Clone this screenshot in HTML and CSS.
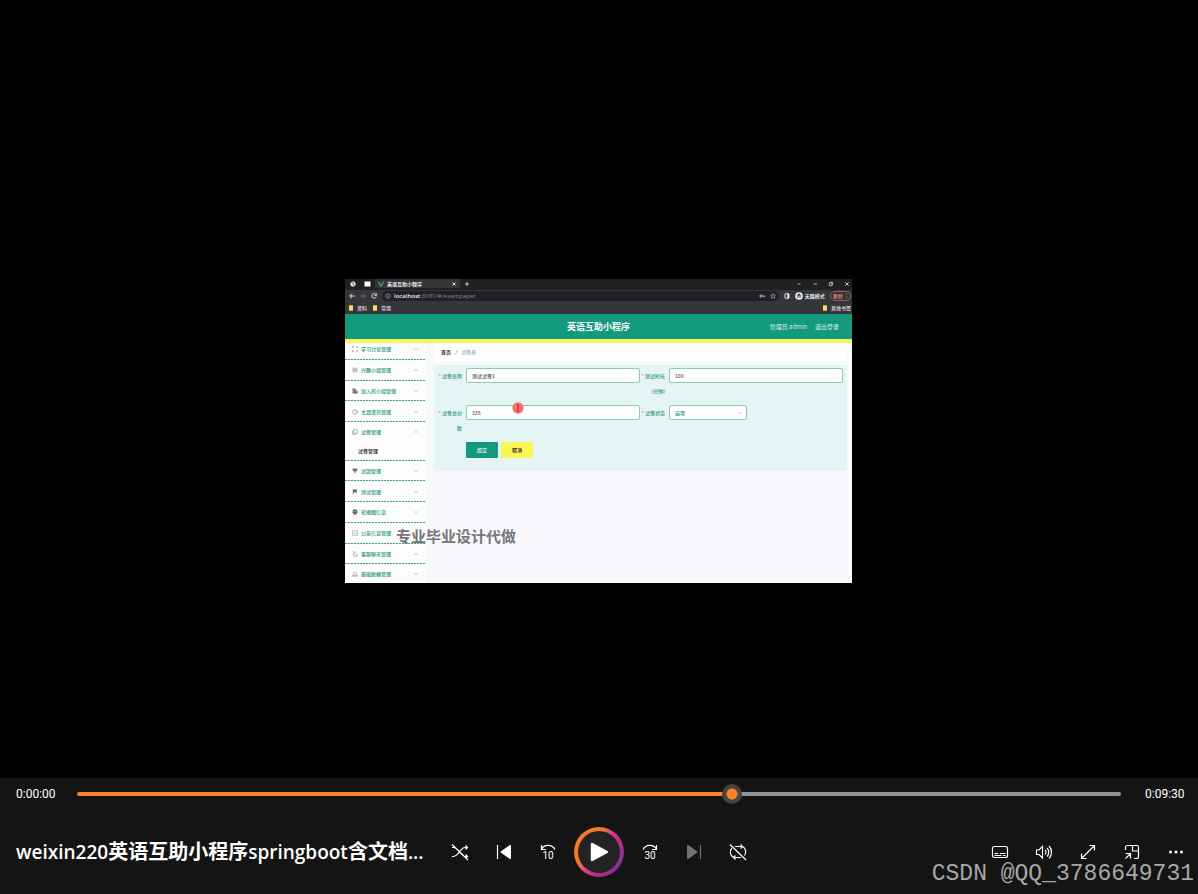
FILE: index.html
```html
<!DOCTYPE html>
<html lang="zh-CN">
<head>
<meta charset="utf-8">
<meta name="viewport" content="width=device-width, initial-scale=1">
<title>weixin220英语互助小程序springboot含文档</title>
<link rel="stylesheet" href="styles.css">
</head>
<body>
<svg class="defs" aria-hidden="true">
  <symbol id="chev" viewBox="0 0 6 6"><path d="M1 2l2 2 2-2" fill="none" stroke="currentColor" stroke-width=".7"/></symbol>
  <symbol id="folder" viewBox="0 0 6 6"><path d="M1 .3h4v5.4H1z" fill="#f6dc6c"/></symbol>
</svg>
<main class="stage">
  <section class="video" aria-label="视频画面">
    <div class="tabs">
      <svg class="ic" viewBox="0 0 6 6"><circle cx="3" cy="3" r="2.6" fill="#eee"/><path d="M1.5 1.5l1.7.6.4 1.6M3.5 5l1-1" stroke="#222" stroke-width=".8" fill="none"/></svg>
      <svg class="ic ic-wide" viewBox="0 0 7 6"><path d="M.5.5h6v5h-6z" fill="#fff"/></svg>
      <div class="tab">
        <svg class="ic" viewBox="0 0 6 6"><path d="M.5.8L3 5.2 5.5.8" fill="none" stroke="#3fb37f" stroke-width="1.1"/></svg>
        <span>英语互助小程序</span>
        <svg class="ic tab-close" viewBox="0 0 6 6"><path d="M1.5 1.5l3 3M4.5 1.5l-3 3" stroke="#eee" stroke-width=".9"/></svg>
      </div>
      <svg class="ic" viewBox="0 0 6 6"><path d="M3 .8v4.4M.8 3h4.4" stroke="#ddd" stroke-width=".8"/></svg>
      <div class="win">
        <svg class="ic" viewBox="0 0 6 6"><path d="M1.5 2L3 3.7 4.500 2" fill="none" stroke="#bbb" stroke-width=".8"/></svg>
        <svg class="ic" viewBox="0 0 6 6"><path d="M1.500 3h3.500" stroke="#ccc" stroke-width=".8"/></svg>
        <svg class="ic" viewBox="0 0 6 6"><path d="M1.300 2h2.700v2.700H1.300zM2.200 1.900V1.200h2.500v2.600" fill="none" stroke="#ddd" stroke-width=".7"/></svg>
        <svg class="ic" viewBox="0 0 6 6"><path d="M1.300 1.300l3.400 3.400M4.700 1.300L1.300 4.700" stroke="#eee" stroke-width=".8"/></svg>
      </div>
    </div>
    <div class="address">
      <svg class="ic" viewBox="0 0 6 6"><path d="M5.700 3H.8M3 .8L.8 3 3 5.200" fill="none" stroke="#eee" stroke-width=".9"/></svg>
      <svg class="ic" viewBox="0 0 6 6"><path d="M.5 3h4.700M3 .8L5.200 3 3 5.200" fill="none" stroke="#77797c" stroke-width=".8"/></svg>
      <svg class="ic" viewBox="0 0 6 6"><path d="M5 1.600A2.300 2.300 0 1 0 5.300 3.500M5.400.4v2H3.500" fill="none" stroke="#eee" stroke-width=".9"/></svg>
      <div class="url">
        <svg class="ic" viewBox="0 0 6 6"><circle cx="3" cy="3" r="2.300" fill="none" stroke="#aaa" stroke-width=".6"/><path d="M3 1.600v.7M3 2.700v1.700" stroke="#bbb" stroke-width=".7"/></svg>
        <span><b>localhost</b>:8081/#/exampaper</span>
        <svg class="ic key" viewBox="0 0 6 6"><circle cx="1.800" cy="3" r="1" fill="none" stroke="#ddd" stroke-width=".8"/><path d="M2.800 3h2.700v1.200" fill="none" stroke="#ddd" stroke-width=".8"/></svg>
        <svg class="ic" viewBox="0 0 6 6"><path d="M3 .6l.7 1.600 1.700.1-1.300 1.200.4 1.700L3 4.300l-1.500.9.4-1.700L.6 2.300l1.700-.1z" fill="none" stroke="#ddd" stroke-width=".5"/></svg>
      </div>
      <svg class="ic" viewBox="0 0 6 6"><path d="M1 .8h4v4.400H1z" fill="none" stroke="#eee" stroke-width=".9"/><path d="M3.300.8H5v4.400H3.300z" fill="#eee"/></svg>
      <div class="mode">
        <svg class="ic ic-big" viewBox="0 0 8 8"><circle cx="4" cy="4" r="3.800" fill="#f4f4f4"/><path d="M1.600 3.900h4.800M2.700 3.600l.5-1.500h1.600l.5 1.500" stroke="#333" stroke-width=".7" fill="#333"/><circle cx="2.900" cy="5.200" r=".6"/><circle cx="5.100" cy="5.200" r=".6"/></svg>
        <span>无痕模式</span>
      </div>
      <button class="update" type="button">更新 <span>⋮</span></button>
    </div>
    <div class="marks">
      <span><svg class="ic"><use href="#folder"/></svg>资料</span>
      <span><svg class="ic"><use href="#folder"/></svg>常用</span>
      <span class="other"><svg class="ic"><use href="#folder"/></svg>其他书签</span>
    </div>
    <header class="banner">
      <h2>英语互助小程序</h2>
      <nav><a href="#admin">管理员 admin</a><a href="#exit">退出登录</a></nav>
    </header>
    <div class="app">
      <nav class="side">
        <a class="item first" href="#m1"><svg class="ic" viewBox="0 0 6 6"><path d="M.6 2V.6H2M4 .6h1.400V2M5.400 4v1.400H4M2 5.400H.6V4" fill="none" stroke="#777" stroke-width=".6"/></svg>学习讨论管理<svg class="arrow"><use href="#chev"/></svg></a>
        <a class="item" href="#m2"><svg class="ic" viewBox="0 0 6 6"><path d="M.5 1.200h5M.5 2.400h5M.5 3.600h5M.5 4.800h5" stroke="#888" stroke-width=".6"/></svg>兴趣小组管理<svg class="arrow"><use href="#chev"/></svg></a>
        <a class="item" href="#m3"><svg class="ic" viewBox="0 0 6 6"><path d="M.5.600h3v1.800h2v3h-5z" fill="#666"/><path d="M1.500 1.500v3M4 3.500h1" stroke="#ddd" stroke-width=".5"/></svg>加入的小组管理<svg class="arrow"><use href="#chev"/></svg></a>
        <a class="item" href="#m4"><svg class="ic" viewBox="0 0 6 6"><path d="M3 1.300V3h1.500" fill="none" stroke="#777" stroke-width=".5"/><circle cx="3" cy="3" r="2.500" fill="none" stroke="#777" stroke-width=".5"/></svg>主题资讯管理<svg class="arrow"><use href="#chev"/></svg></a>
        <div class="group">
          <a class="item" href="#m5"><svg class="ic" viewBox="0 0 6 6"><path d="M1.700.600h3.700V4.400H1.700zM1.700 2H.6v3.400h3V4.400" fill="none" stroke="#777" stroke-width=".5"/></svg>试卷管理<svg class="arrow up"><use href="#chev"/></svg></a>
          <a class="sub" href="#m5a">试卷管理</a>
        </div>
        <a class="item" href="#m6"><svg class="ic" viewBox="0 0 6 6"><path d="M.5.6h5v1.600L4.300 3.500h-.8v1.900h-1V3.500h-.8L.5 2.200z" fill="#777"/></svg>试题管理<svg class="arrow"><use href="#chev"/></svg></a>
        <a class="item" href="#m7"><svg class="ic" viewBox="0 0 6 6"><path d="M.8.500h4.700l-1 1.500 1 1.600H1.500v2H.8z" fill="#666"/></svg>测试管理<svg class="arrow"><use href="#chev"/></svg></a>
        <a class="item" href="#m8"><svg class="ic" viewBox="0 0 6 6"><path d="M1.400.600h3.200l.9 1.500v2H4.700v1.300H1.300V4.100H.5v-2z" fill="#666"/><path d="M.8 2.500h4.400" stroke="#ccc" stroke-width=".4"/></svg>轮播图信息<svg class="arrow"><use href="#chev"/></svg></a>
        <a class="item" href="#m9"><svg class="ic" viewBox="0 0 6 6"><path d="M.6.800h4.800v4.500H.6zM1.700 3l1 1 1.700-2" fill="none" stroke="#888" stroke-width=".5"/></svg>公告信息管理<svg class="arrow"><use href="#chev"/></svg></a>
        <a class="item" href="#m10"><svg class="ic" viewBox="0 0 6 6"><path d="M.6 1h4M1 2.500h2.500M1.500 2.500v2.800h3.700V2.700M3.500 3.500l1.500 1.500" fill="none" stroke="#888" stroke-width=".5"/></svg>客服聊天管理<svg class="arrow"><use href="#chev"/></svg></a>
        <a class="item last" href="#m11"><svg class="ic" viewBox="0 0 6 6"><path d="M1.300 4.200V2.600a1.700 1.700 0 0 1 3.400 0v1.600M.5 4.500h5v.8h-5zM3 3v1" fill="none" stroke="#888" stroke-width=".5"/></svg>基础数据管理<svg class="arrow"><use href="#chev"/></svg></a>
      </nav>
      <div class="content">
        <div class="crumb"><b>首页</b><i>/</i><span>试卷表</span></div>
        <form class="form">
          <label for="f1"><em>*</em>试卷名称</label><input id="f1" value="测试试卷1">
          <label for="f2"><em>*</em>测试时长<br>(分钟)</label><input id="f2" value="100">
          <label for="f3"><em>*</em>试卷总分<br>数</label><input id="f3" value="335">
          <label for="f4"><em>*</em>试卷状态</label>
          <div class="pick"><select id="f4"><option>启用</option></select><svg class="arrow"><use href="#chev"/></svg></div>
          <div class="actions"><button class="ok" type="button">提交</button><button class="cancel" type="button">取消</button></div>
        </form>
      </div>
    </div>
    <svg class="pointer" viewBox="0 0 12 12"><circle cx="6" cy="6" r="5.700" fill="#f4736c"/><path d="M5 3h2M5 9h2M6 3v6" stroke="#a92b2b" stroke-width=".9"/></svg>
    <div class="caption">专业毕业设计代做</div>
  </section>
</main>
<footer class="player">
  <div class="timeline">
    <time>0:00:00</time>
    <input class="seek" type="range" min="0" max="570" value="359" aria-label="播放进度">
    <time>0:09:30</time>
  </div>
  <div class="controls">
    <h1>weixin220<span>英语互助小程序</span>springboot<span>含文档</span>...</h1>
    <div class="transport">
      <button type="button" aria-label="随机播放"><svg viewBox="0 0 20 20"><path d="M2 14.500h1.500c2 0 3.200-1.200 4.500-3l3.500-4C12.500 6 13.500 5.500 15 5.500h2.500M2 5.500h1.500c2 0 3.200 1.200 4.500 2.500l3.500 4c1 1.500 2 2.500 3.500 2.500h2.500M15.500 3.500l2 2-2 2M15.500 12.500l2 2-2 2M2 2.500l16 15.500"/></svg></button>
      <button type="button" aria-label="上一个"><svg viewBox="0 0 20 20"><path d="M3.500 3v14"/><path class="solid" d="M17 4v12c0 .8-.8 1.300-1.500.8l-8.500-6a1 1 0 0 1 0-1.600l8.500-6c.7-.5 1.500 0 1.500.8z"/></svg></button>
      <button type="button" aria-label="后退10秒"><svg viewBox="0 0 20 20"><path d="M3.500 3v4.500H8M3.500 7C6 2.500 14 1.500 17 7.500"/><text x="10" y="17">10</text></svg></button>
      <button class="play" type="button" aria-label="播放"><svg viewBox="0 0 24 24"><path class="solid" d="M3 3.500v17c0 1.200 1.200 1.800 2.200 1.200l16-8.500c1-.6 1-1.800 0-2.400l-16-8.500C4.200 1.700 3 2.300 3 3.500z"/></svg></button>
      <button type="button" aria-label="前进30秒"><svg viewBox="0 0 20 20"><path d="M16.500 3v4.500H12M16.500 7C14 2.500 6 1.500 3 7.500"/><text x="10" y="17">30</text></svg></button>
      <button class="off" type="button" aria-label="下一个"><svg viewBox="0 0 20 20"><path d="M16.500 3v14"/><path class="solid" d="M3 4v12c0 .8.8 1.300 1.500.8l8.500-6a1 1 0 0 0 0-1.600l-8.500-6C3.800 2.700 3 3.200 3 4z"/></svg></button>
      <button type="button" aria-label="循环"><svg viewBox="0 0 20 20"><path d="M7 4.500h7.500M14.500 4.500a6 6 0 0 1 2 9M13 15.500H5.500M5.500 15.500a6 6 0 0 1-1.500-9.500M12.500 2.500l2 2-2 2M7.500 13.500l-2 2 2 2M2 2.500l16 15.500"/></svg></button>
    </div>
    <div class="tools">
      <button type="button" aria-label="字幕"><svg viewBox="0 0 20 20"><rect x="2.500" y="4.500" width="15" height="11" rx="2"/><path d="M4.500 11.500h4M10 11.500h5.500M4.500 13.500h7M13 13.500h2.500"/></svg></button>
      <button type="button" aria-label="音量"><svg viewBox="0 0 20 20"><path d="M2.500 8v4.500h2.500l3.500 3.500V4.500L5 8zM11 8a3 3 0 0 1 0 4.500M13 6a6 6 0 0 1 0 8.500M15 4a9 9 0 0 1 0 12.500"/></svg></button>
      <button type="button" aria-label="全屏"><svg viewBox="0 0 20 20"><path d="M3.500 16.500l13-13M11.500 3.500h5v5M3.500 11.500v5h5"/></svg></button>
      <button type="button" aria-label="迷你播放器"><svg viewBox="0 0 20 20"><path d="M3.500 8V5.500a2 2 0 0 1 2-2h9a2 2 0 0 1 2 2v9a2 2 0 0 1-2 2H12M10.500 3.500V9h6M3.500 16.500l5-5M3.500 11.500h5v5"/></svg></button>
      <button type="button" aria-label="更多"><svg viewBox="0 0 20 20"><g class="solid"><circle cx="4.500" cy="10" r="1.500"/><circle cx="10" cy="10" r="1.500"/><circle cx="15.500" cy="10" r="1.500"/></g></svg></button>
    </div>
  </div>
  <div class="watermark">CSDN @QQ_3786649731</div>
</footer>
</body>
</html>
```
FILE: styles.css
```css
* { box-sizing: border-box; }
body { margin: 0; min-height: 100vh; display: flex; flex-direction: column; background: #000; color: #fff; font-family: "Open Sans", "Noto Sans CJK SC", sans-serif; }
button, input, select { font: inherit; color: inherit; margin: 0; padding: 0; border: 0; background: none; }
a { color: inherit; text-decoration: none; }
.defs { position: absolute; width: 0; height: 0; }

.stage { flex: 1; display: flex; align-items: center; justify-content: center; padding: 84px 1px 0 0; }
.video { position: relative; width: 507px; font: 500 5px/8px "Noto Sans CJK SC", sans-serif; background: #f9f8fc; }
.ic { width: 6px; height: 6px; flex: none; display: block; }
.ic-wide { width: 7px; }
.ic-big { width: 8px; height: 8px; }

.tabs { display: flex; align-items: center; gap: 8px; height: 11px; padding: 0 2px 2px 5px; background: #202124; }
.tab { display: flex; align-items: center; gap: 3px; width: 85px; height: 9px; margin: 0 -4px; padding: 0 3px; background: #35363a; }
.tab-close { margin-left: auto; }
.win { display: flex; gap: 10px; margin-left: auto; }
.address { display: flex; align-items: center; gap: 5px; height: 12px; padding: 0 1px 0 4px; background: #35363a; }
.url { flex: 1; display: flex; align-items: center; gap: 3px; height: 10px; padding: 0 3px; border-radius: 5px; background: #202124; color: #888; font-size: 6px; font-family: "Open Sans", sans-serif; font-weight: 400; }
.url b { color: #eee; font-weight: 600; }
.key { margin-left: auto; margin-right: 2px; }
.mode { display: flex; align-items: center; gap: 2px; }
.update { height: 10px; padding: 0 1px 0 2px; border: 1px solid #a45850; border-radius: 5px; color: #e8867c; line-height: 8px; white-space: nowrap; }
.marks { display: flex; gap: 5px; height: 12px; padding: 0 1px 0 3px; background: #35363a; color: #ddd; }
.marks > span { display: flex; align-items: center; gap: 3px; }
.marks .other { margin-left: auto; }

.banner { display: grid; grid-template-columns: 1fr auto 1fr; align-items: center; height: 29px; border-bottom: 4px solid #fbf35a; background: #13997d; }
.banner h2 { grid-column: 2; margin: 0; font-size: 9px; line-height: 12px; }
.banner nav { display: flex; justify-content: flex-end; gap: 8px; padding-right: 13px; font-size: 6px; font-weight: 400; color: #d3eee7; }

.app { display: flex; height: 240px; }
.side { flex: none; width: 81px; display: flex; flex-direction: column; background: #fdfdfd; color: #2d9983; }
.item { position: relative; flex: 21 1 0; min-height: 0; display: flex; align-items: center; gap: 3px; padding: 0 7px; }
.item.first { flex-grow: 13; padding-bottom: 4px; }
.item.last { flex-grow: 19; }
.item::after, .group::after { content: ""; position: absolute; left: 0; right: 0; bottom: 0; height: 1px; background: repeating-linear-gradient(90deg, #3da58e 0 2px, #d9efea 2px 3px); }
.item.last::after, .group .item::after { display: none; }
.group { position: relative; flex: 39 1 0; min-height: 0; display: flex; flex-direction: column; }
.sub { flex: 18 1 0; padding-left: 13px; color: #222; line-height: 16px; }
.arrow { width: 6px; height: 6px; margin-left: auto; color: #bbb; }
.arrow.up { transform: rotate(180deg); }

.content { flex: 1; padding: 0 5px 0 8px; }
.crumb { display: flex; align-items: center; gap: 4px; height: 18px; padding-left: 7px; background: #fff; color: #a5b0bb; }
.crumb b { color: #333; }
.crumb i { color: #c98a4b; font-weight: 700; }
.form { display: grid; grid-template-columns: 32px 174px 29px 174px; grid-template-rows: 37px 37px 16px; align-items: start; margin-top: 4px; padding: 3px 4px 13px 0; background: #e4f5f4; }
.form label { padding-right: 4px; text-align: right; color: #2d9983; line-height: 15px; }
.form em { color: #e55; font-style: normal; margin-right: 1px; }
.form input, .form select { width: 100%; height: 15px; padding: 0 5px; border: 1px solid #8ec9be; border-radius: 2px; background: #fff; color: #555; appearance: none; }
.pick { position: relative; width: 78px; }
.pick .arrow { position: absolute; right: 4px; top: 5px; }
.form .pick select { display: block; color: #2d9983; }
.actions { grid-column: 2; display: flex; gap: 3px; }
.actions button { width: 32px; height: 16px; border-radius: 1px; background: #13997d; }
.actions .cancel { background: #fcf556; color: #222; }
.pointer { position: absolute; left: 167px; top: 123px; width: 12px; height: 12px; }
.caption { position: absolute; left: 51px; top: 247px; color: #77757a; font-size: 15px; font-weight: 700; line-height: 20px; }

.player { position: relative; height: 116px; background: #141414; }
.timeline { display: flex; align-items: center; gap: 24px; height: 32px; padding: 0 16px; font: 12px Roboto, sans-serif; }
.timeline time { width: 37px; }
.seek { flex: 1; min-width: 0; height: 20px; appearance: none; }
.seek::-webkit-slider-runnable-track { height: 4px; border-radius: 2px; background: linear-gradient(90deg, #ff8126 63%, #939393 63%); }
.seek::-webkit-slider-thumb { appearance: none; width: 20px; height: 20px; margin-top: -8px; border-radius: 50%; background: radial-gradient(circle, #ff8126 5px, #454545 6px); }
.controls { display: grid; grid-template-columns: 1fr auto 1fr; align-items: center; height: 84px; }
h1 { margin: 0; padding-left: 16px; font-size: 19px; font-weight: 600; line-height: 28px; white-space: nowrap; }
h1 span { font-size: 20px; font-weight: 700; }
.transport, .tools { display: flex; align-items: center; gap: 4px; }
.tools { justify-content: flex-end; padding-right: 2px; }
.controls button { display: grid; place-items: center; width: 40px; height: 40px; }
.controls svg { width: 20px; height: 20px; fill: none; stroke: #fff; stroke-width: 1.2; }
.controls .solid { fill: #fff; stroke: none; }
.controls text { fill: #fff; stroke: none; font: 10px Roboto, sans-serif; text-anchor: middle; }
.controls .play { width: 50px; height: 50px; margin: 0 2px; border: 4px solid transparent; border-radius: 50%; background: linear-gradient(#232323, #232323) padding-box, linear-gradient(125deg, #f5792a 35%, #d93f86 50%, #b92d8e 65%, #5f3192) border-box; }
.controls .play svg { width: 22px; height: 22px; }
.controls .off { opacity: .4; }
.watermark { position: absolute; right: 4px; bottom: 6px; color: #a8a8a8; font: 23px/28px "Liberation Mono", monospace; pointer-events: none; }
```
